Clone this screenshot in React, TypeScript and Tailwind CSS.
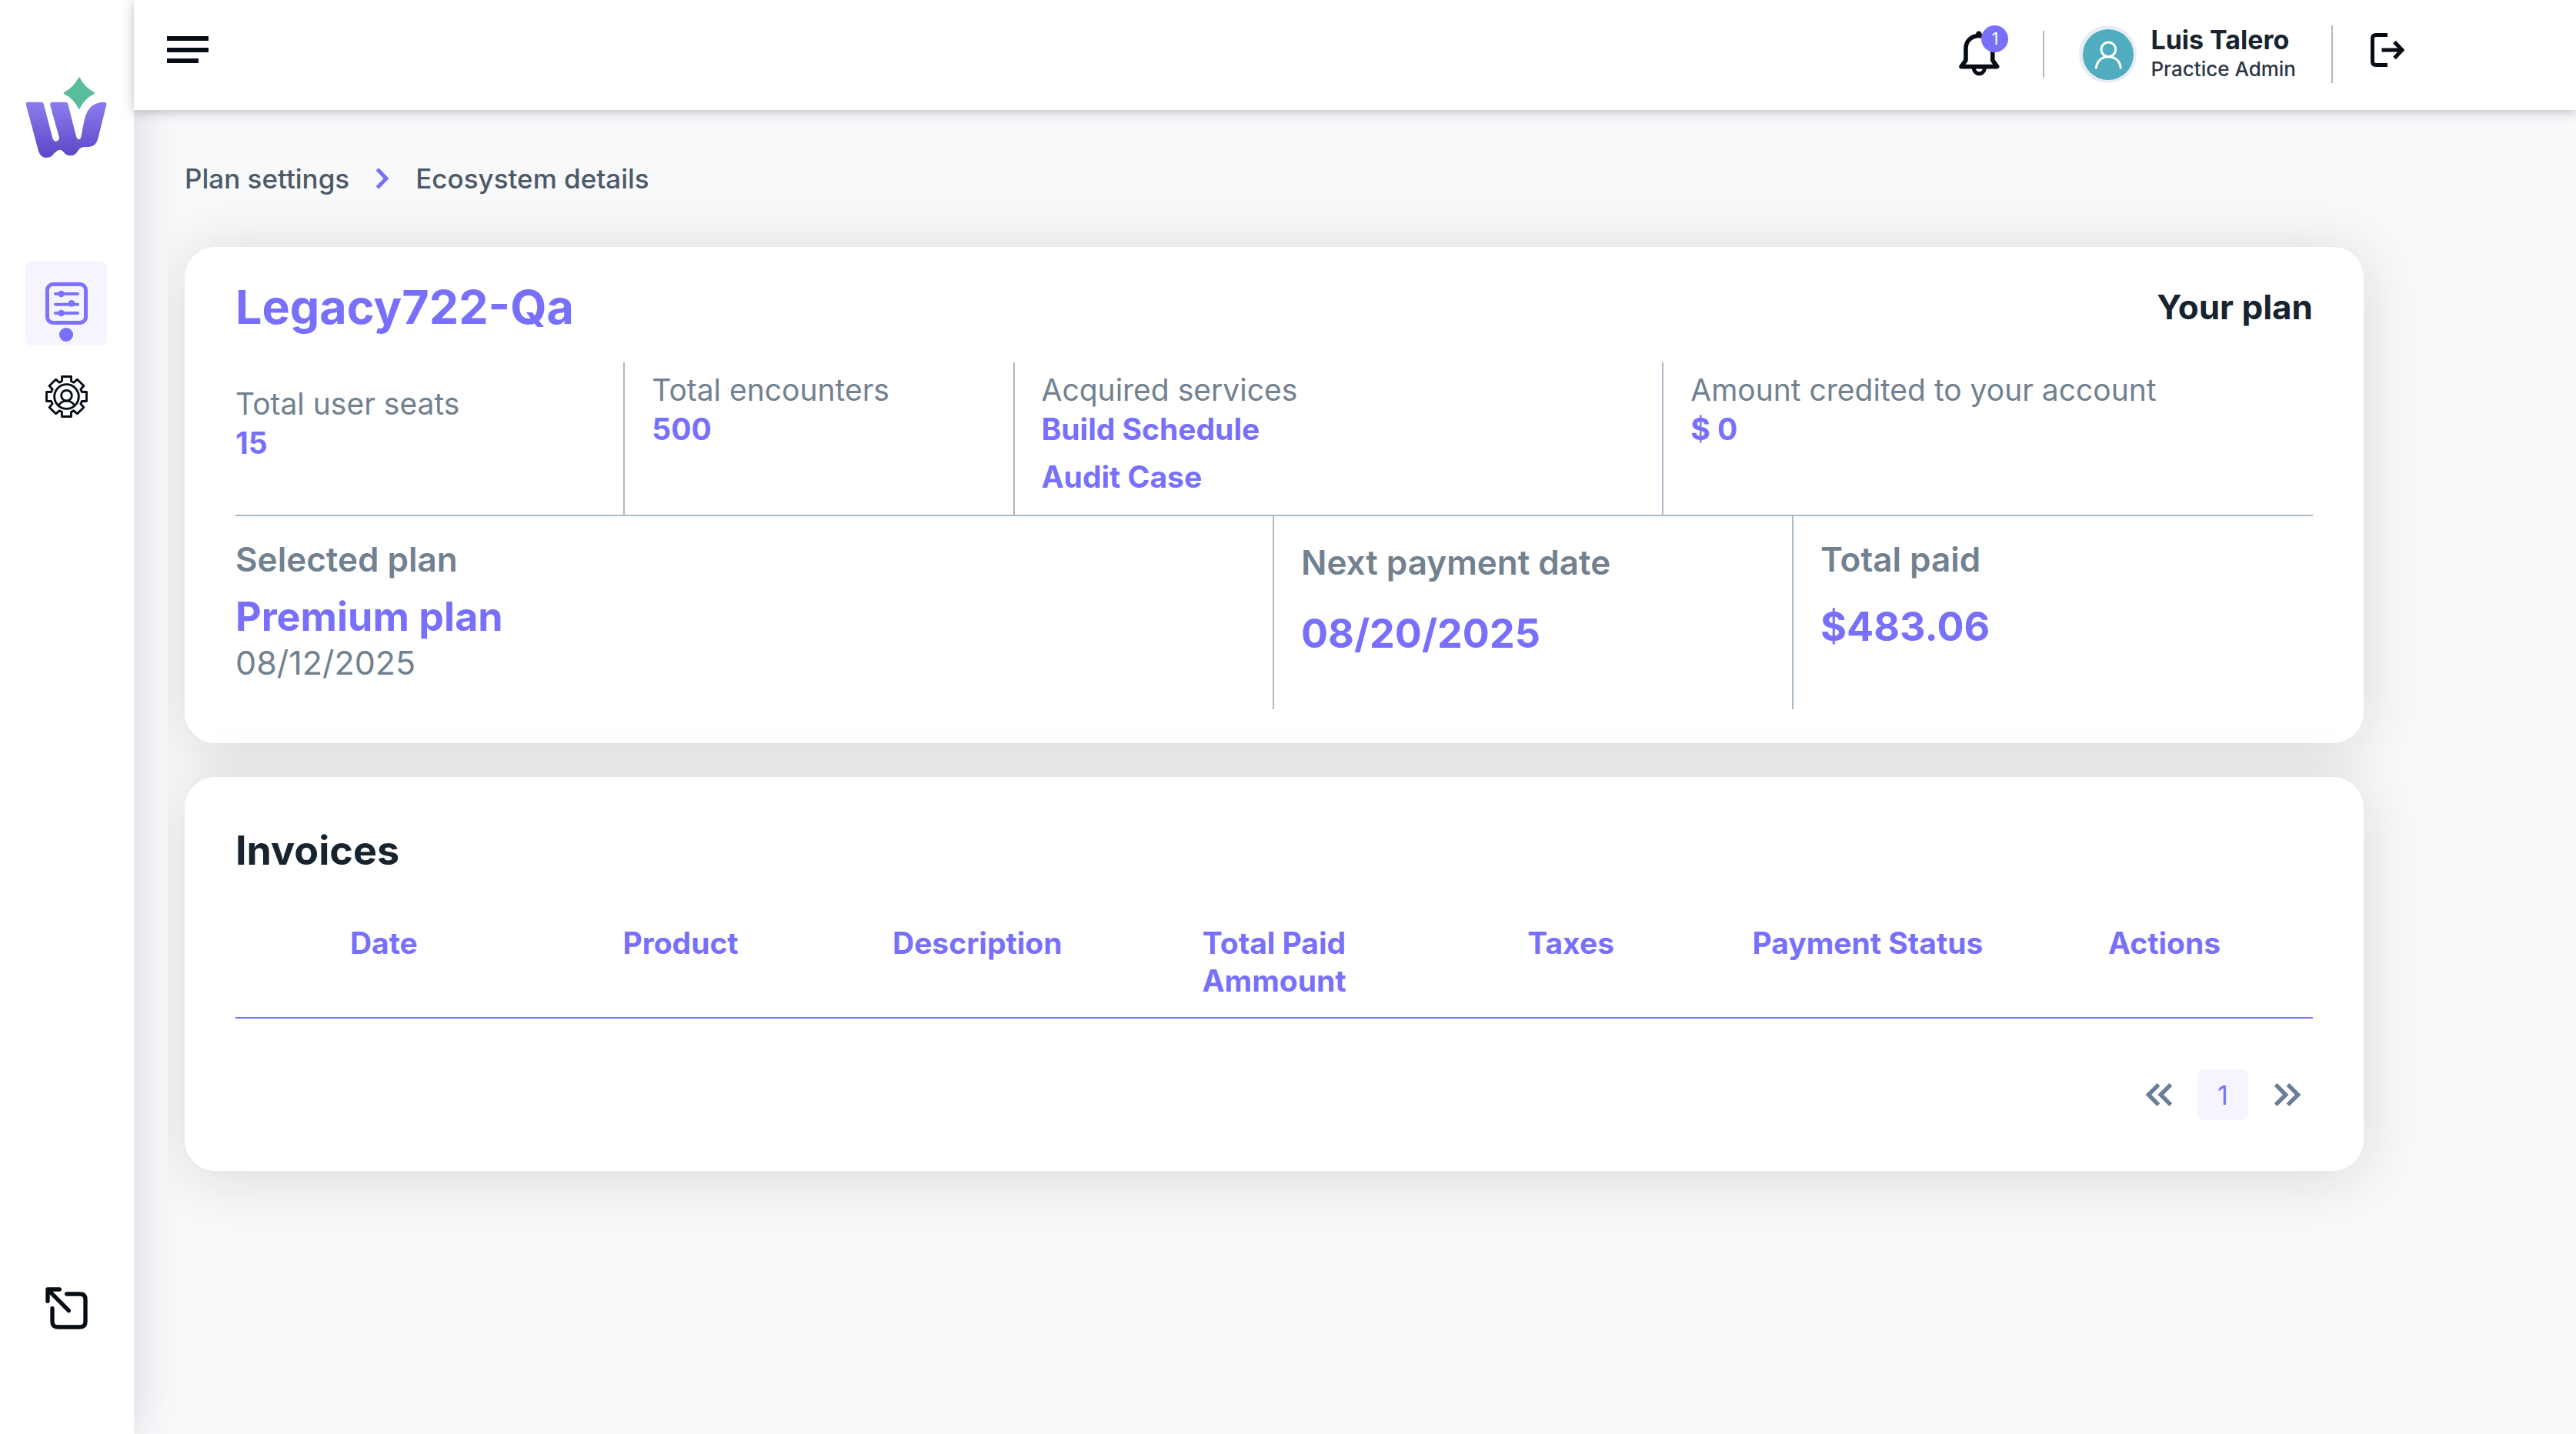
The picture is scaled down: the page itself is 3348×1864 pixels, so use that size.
import React from "react";

function Logo() {
  return (
    <svg viewBox="99 118 318 318" className="size-[106px]" role="img" aria-label="W">
      <defs>
        <linearGradient id="mark" x1="0" y1="216" x2="0" y2="420" gradientUnits="userSpaceOnUse">
          <stop offset="0" stopColor="#8a7eee" />
          <stop offset="1" stopColor="#5f48c9" />
        </linearGradient>
      </defs>
      <path
        fill="url(#mark)"
        d="M107 216H161Q168 216 170 223L205 356Q208 369 217 369Q230 368 231 355L196 229Q193 216 205 216H256Q263 216 265 223L297 350Q301 362 307 362Q313 362 316 352L329 286Q344 216 407 216Q417 216 415 227L382 358Q374 391 345 391H332Q313 391 304 406Q293 425 275 425Q259 425 249 412Q241 402 234 402Q224 402 211 416Q201 433 182 433Q158 433 150 407L102 229Q99 216 107 216Z"
      />
      <path
        fill="#58bd9b"
        d="M305 122Q308.500 117 312 122Q329 158 366 177Q373 181 366 185Q329 204 312 240Q308.500 246 305 240Q288 204 251 185Q244 181 251 177Q288 158 305 122Z"
      />
    </svg>
  );
}

function SlidersIcon() {
  return (
    <svg viewBox="177 921 165 165" className="size-[55px]" fill="none" stroke="#7d72fb" strokeLinecap="round" aria-hidden="true">
      <rect x="184.500" y="928.500" width="150" height="150" rx="22" strokeWidth="15" />
      <path strokeWidth="12" d="M216 966H303M216 1007H303M216 1041H303" />
      <g strokeWidth="10">
        <circle cx="239" cy="966" r="8" />
        <circle cx="279" cy="1003" r="8" />
        <circle cx="239" cy="1041" r="8" />
      </g>
    </svg>
  );
}

function GearUserIcon() {
  return (
    <svg viewBox="-82.500 -82.500 165 165" className="size-[55px]" fill="none" stroke="#050c14" strokeWidth="8.500" aria-hidden="true">
      <path
        strokeLinejoin="round"
        d="M-18 -78H18V-60L28 -55L42 -67L67 -42L55 -28L60 -18H78V18H60L55 28L67 42L42 67L28 55L18 60V78H-18V60L-28 55L-42 67L-67 42L-55 28L-60 18H-78V-18H-60L-55 -28L-67 -42L-42 -67L-28 -55L-18 -60Z"
      />
      <circle r="47.500" />
      <circle cy="-4" r="20.500" />
      <path d="M-32 35C-24 23 -12 17 0 17S24 23 32 35" />
    </svg>
  );
}

function ExitIcon() {
  return (
    <svg viewBox="177 219 165 165" className="size-[55px]" fill="none" stroke="#050c14" strokeWidth="16" strokeLinecap="round" strokeLinejoin="round" aria-hidden="true">
      <path d="M186 274V228H232M190 232L268 311" />
      <path d="M260 246H312Q333 246 333 267V354Q333 375 312 375H225Q204 375 204 354V302" />
    </svg>
  );
}

function MenuIcon() {
  return (
    <svg viewBox="0 0 54 36" className="h-[36px] w-[54px]" fill="#050c14" aria-hidden="true">
      <path d="M0 0H54V6H0ZM0 15H54V21H0ZM0 29H41V35H0Z" />
    </svg>
  );
}

function BellIcon() {
  return (
    <svg viewBox="21 63 160 177" className="h-[59px] w-[53px]" fill="none" stroke="#050c14" strokeWidth="17" strokeLinejoin="round" aria-hidden="true">
      <circle cx="99" cy="75" r="11" fill="#050c14" stroke="none" />
      <path d="M30 203L48 178V132C48 102 70 82 100 82S153 102 153 132V178L171 203Z" />
      <path strokeWidth="15" d="M79 208A21.500 23 0 0 0 122 208" />
    </svg>
  );
}

function Avatar() {
  return (
    <span className="flex size-[75px] items-center justify-center rounded-full bg-[#e8edf4]">
      <span className="flex size-[66px] items-center justify-center rounded-full bg-[#4fadbf]">
        <svg viewBox="503 53 198 198" className="size-[66px]" fill="none" stroke="#fff" strokeWidth="9" strokeLinecap="round" aria-hidden="true">
          <circle cx="603" cy="132" r="28" />
          <path d="M555 203C559 176 578 160 603 160S647 176 651 203" />
        </svg>
      </span>
    </span>
  );
}

function LogoutIcon() {
  return (
    <svg viewBox="0 0 44 44" className="size-[44px]" fill="none" stroke="#050c14" strokeWidth="5" aria-hidden="true">
      <path d="M22 2.500H7Q2.500 2.500 2.500 7V37Q2.500 41.500 7 41.500H22" />
      <path d="M14.500 22H41M31 11.500L41 22L31 32.500" />
    </svg>
  );
}

function DoubleChevron({ flip = false }: { flip?: boolean }) {
  return (
    <svg viewBox="22 82 110 94" className={flip ? "h-[32px] w-[37px] rotate-180" : "h-[32px] w-[37px]"} fill="none" stroke="#6c7d9c" strokeWidth="16" aria-hidden="true">
      <path d="M77 90L38 129L77 168M124 90L85 129L124 168" />
    </svg>
  );
}

function Sidebar() {
  return (
    <aside className="z-10 flex w-[174px] shrink-0 flex-col items-center bg-white pt-[100px] pr-[2px] pb-[136px] shadow-[0_0_60px_rgba(30,30,50,0.16)]">
      <Logo />
      <nav className="mt-[133px] flex flex-col items-center gap-[39px]">
        <a href="#plan" aria-label="Plan settings" className="flex h-[110px] w-[106px] flex-col items-center rounded-lg bg-[#f6f4ff] pt-[28px]">
          <SlidersIcon />
          <span className="mt-1 size-[18px] rounded-full bg-[#7870fa]" />
        </a>
        <a href="#account" aria-label="Account settings">
          <GearUserIcon />
        </a>
      </nav>
      <button aria-label="Exit" className="mt-auto">
        <ExitIcon />
      </button>
    </aside>
  );
}

function Header() {
  return (
    <header className="relative z-20 flex h-[143px] items-start bg-white pt-[33px] pr-[223px] pl-[43px] shadow-[0_2px_14px_rgba(40,50,60,0.32)]">
      <button aria-label="Toggle menu" className="mt-[14px]">
        <MenuIcon />
      </button>
      <div className="ml-auto flex items-start">
        <button aria-label="Notifications" className="relative h-[66px] w-[64px] pt-[7px]">
          <BellIcon />
          <span className="absolute top-0 right-0 flex size-[35px] items-center justify-center rounded-full bg-[#7870fa] text-[22px] text-white">1</span>
        </button>
        <div className="mt-[7px] ml-[45px] h-[61px] w-[2px] bg-[#a9b9c6]" />
        <div className="ml-[45px] flex items-start gap-[18px]">
          <Avatar />
          <div className="flex flex-col">
            <span className="text-[34px] leading-[38px] font-bold text-[#17232e]">Luis Talero</span>
            <span className="text-[26px] leading-[38px] font-medium text-[#2c3845]">Practice Admin</span>
          </div>
        </div>
        <div className="ml-[46px] h-[75px] w-[2px] bg-[#a9b9c6]" />
        <button aria-label="Log out" className="mt-[10px] ml-[49px]">
          <LogoutIcon />
        </button>
      </div>
    </header>
  );
}

const card = "rounded-[40px] bg-white px-[66px] shadow-[0_8px_80px_rgba(20,22,24,0.14)]";
const label = "text-[39px] leading-[51px] text-[#72818f]";
const value = "text-[39px] leading-[52px] font-bold text-[#7870fa]";
const bigLabel = "text-[44px] leading-[52px] font-semibold text-[#72818f]";
const bigValue = "text-[52px] leading-[66px] font-bold text-[#7870fa]";

function PlanCard() {
  return (
    <section className={`${card} pt-[42px] pb-[44px]`}>
      <div className="flex items-center justify-between">
        <h1 className="text-[61px] leading-[72px] font-bold text-[#7870fa]">Legacy722-Qa</h1>
        <p className="text-[44px] leading-[52px] font-bold text-[#17232e]">Your plan</p>
      </div>
      <div className="mt-[36px] grid grid-cols-[3fr_3fr_5fr_5fr] border-b-2 border-[#a9b9c6]">
        <div className="border-r-2 border-[#a9b9c6] pt-[28px]">
          <p className={label}>Total user seats</p>
          <p className={value}>15</p>
        </div>
        <div className="border-r-2 border-[#a9b9c6] pt-[10px] pl-[35px]">
          <p className={label}>Total encounters</p>
          <p className={value}>500</p>
        </div>
        <div className="border-r-2 border-[#a9b9c6] pt-[10px] pb-[23px] pl-[35px]">
          <p className={label}>Acquired services</p>
          <ul className="flex flex-col gap-[10px]">
            <li className={value}>Build Schedule</li>
            <li className={value}>Audit Case</li>
          </ul>
        </div>
        <div className="pt-[10px] pl-[35px]">
          <p className={label}>Amount credited to your account</p>
          <p className={value}>$ 0</p>
        </div>
      </div>
      <div className="grid grid-cols-[2fr_1fr_1fr]">
        <div className="border-r-2 border-[#a9b9c6] pt-[30px] pb-[35px]">
          <p className={bigLabel}>Selected plan</p>
          <p className={`${bigValue} mt-[16px]`}>Premium plan</p>
          <p className="text-[43px] leading-[52px] text-[#72818f]">08/12/2025</p>
        </div>
        <div className="border-r-2 border-[#a9b9c6] pt-[34px] pl-[35px]">
          <p className={bigLabel}>Next payment date</p>
          <p className={`${bigValue} mt-[34px]`}>08/20/2025</p>
        </div>
        <div className="pt-[30px] pl-[35px]">
          <p className={bigLabel}>Total paid</p>
          <p className={`${bigValue} mt-[29px]`}>$483.06</p>
        </div>
      </div>
    </section>
  );
}

const columns = ["Date", "Product", "Description", "Total Paid Ammount", "Taxes", "Payment Status", "Actions"];

function InvoicesCard() {
  return (
    <section className={`${card} pt-[63px] pb-[66px]`}>
      <h2 className="text-[52px] leading-[66px] font-bold text-[#17232e]">Invoices</h2>
      <table className="mt-[39px] w-full table-fixed border-b-2 border-[#7870fa]">
        <thead>
          <tr>
            {columns.map((name) => (
              <th key={name} scope="col" className="px-[34px] pt-[23px] pb-[23px] align-top text-[39px] leading-[49px] font-bold text-[#7870fa]">
                {name}
              </th>
            ))}
          </tr>
        </thead>
      </table>
      <nav aria-label="Pagination" className="mt-[66px] flex justify-end gap-[18px]">
        <button aria-label="Previous" className="flex size-[66px] items-center justify-center">
          <DoubleChevron />
        </button>
        <button aria-current="page" className="flex size-[66px] items-center justify-center rounded-lg bg-[#f6f4ff] text-[34px] text-[#7870fa]">
          1
        </button>
        <button aria-label="Next" className="flex size-[66px] items-center justify-center">
          <DoubleChevron flip />
        </button>
      </nav>
    </section>
  );
}

export default function App() {
  return (
    <div className="flex min-h-screen bg-[#f8f9fb] font-['Inter',sans-serif]">
      <Sidebar />
      <div className="flex min-w-0 grow flex-col">
        <Header />
        <main className="ml-[44px] grow overflow-hidden pt-[67px] pr-[276px] pl-[22px]">
          <nav aria-label="Breadcrumb" className="flex items-center gap-[34px] text-[35px] leading-[44px] font-medium text-[#4c5967]">
            <a href="#plan">Plan settings</a>
            <svg viewBox="0 0 18 28" className="h-[28px] w-[18px]" fill="none" stroke="#7870fa" strokeWidth="5" aria-hidden="true">
              <path d="M2.500 2L14 14L2.500 26" />
            </svg>
            <a href="#ecosystem" aria-current="page">Ecosystem details</a>
          </nav>
          <div className="mt-[67px] flex flex-col gap-[44px]">
            <PlanCard />
            <InvoicesCard />
          </div>
        </main>
      </div>
    </div>
  );
}
